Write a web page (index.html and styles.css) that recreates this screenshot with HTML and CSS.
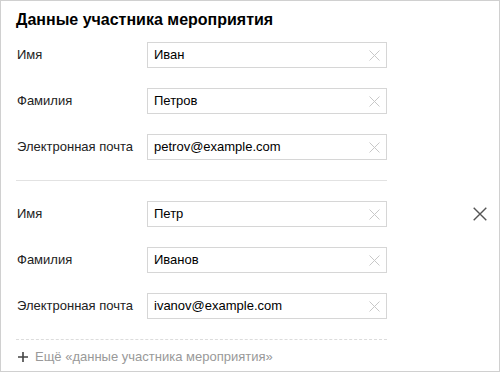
FILE: index.html
```html
<!DOCTYPE html>
<html lang="ru">
<head>
<meta charset="UTF-8" />
<title>Данные участника мероприятия</title>
<link rel="stylesheet" href="styles.css">
</head>
<body>
  <div class="panel">
    <h1 class="title">Данные участника мероприятия</h1>

    <div class="group">
      <div class="fields">
        <label class="label">Имя</label>
        <div class="field"><span class="value">Иван</span><svg class="clear" width="11" height="11" viewBox="0 0 11 11"><path d="M0.5 0.5L10.5 10.5M10.5 0.5L0.5 10.5" stroke="#c8c8c8" stroke-width="1" fill="none"/></svg></div>
        <label class="label">Фамилия</label>
        <div class="field"><span class="value">Петров</span><svg class="clear" width="11" height="11" viewBox="0 0 11 11"><path d="M0.5 0.5L10.5 10.5M10.5 0.5L0.5 10.5" stroke="#c8c8c8" stroke-width="1" fill="none"/></svg></div>
        <label class="label">Электронная почта</label>
        <div class="field"><span class="value">petrov@example.com</span><svg class="clear" width="11" height="11" viewBox="0 0 11 11"><path d="M0.5 0.5L10.5 10.5M10.5 0.5L0.5 10.5" stroke="#c8c8c8" stroke-width="1" fill="none"/></svg></div>
      </div>
    </div>

    <div class="divider"></div>

    <div class="group">
      <div class="fields">
        <label class="label">Имя</label>
        <div class="field"><span class="value">Петр</span><svg class="clear" width="11" height="11" viewBox="0 0 11 11"><path d="M0.5 0.5L10.5 10.5M10.5 0.5L0.5 10.5" stroke="#c8c8c8" stroke-width="1" fill="none"/></svg></div>
        <label class="label">Фамилия</label>
        <div class="field"><span class="value">Иванов</span><svg class="clear" width="11" height="11" viewBox="0 0 11 11"><path d="M0.5 0.5L10.5 10.5M10.5 0.5L0.5 10.5" stroke="#c8c8c8" stroke-width="1" fill="none"/></svg></div>
        <label class="label">Электронная почта</label>
        <div class="field"><span class="value">ivanov@example.com</span><svg class="clear" width="11" height="11" viewBox="0 0 11 11"><path d="M0.5 0.5L10.5 10.5M10.5 0.5L0.5 10.5" stroke="#c8c8c8" stroke-width="1" fill="none"/></svg></div>
      </div>
      <button class="remove" type="button" title="Удалить">
        <svg width="14" height="14" viewBox="0 0 14 14"><path d="M0.7 0.7L13.3 13.3M13.3 0.7L0.7 13.3" stroke="#555" stroke-width="1.4" fill="none"/></svg>
      </button>
    </div>

    <div class="dashed"></div>

    <div class="more">
      <svg class="plus" width="10" height="10" viewBox="0 0 10 10"><path d="M5 0V10M0 5H10" stroke="#444" stroke-width="1.6" fill="none"/></svg>
      <span>Ещё «данные участника мероприятия»</span>
    </div>
  </div>
</body>
</html>
```

FILE: styles.css
```css
* {
  box-sizing: border-box;
}
html, body {
  margin: 0;
  padding: 0;
  background: #fff;
}

.panel {
  width: 500px;
  height: 372px;
  border: 1px solid #d0d0d0;
  padding: 0 12px 0 15px;
  font-family: "Liberation Sans", Arial, sans-serif;
  font-size: 13px;
  color: #222;
  overflow: hidden;
}

.title {
  margin: 0;
  padding-top: 9px;
  font-size: 16px;
  line-height: 19px;
  font-weight: bold;
  color: #000;
}

.group {
  display: flex;
  align-items: flex-start;
}
.group:first-of-type {
  margin-top: 13px;
}

.fields {
  display: grid;
  grid-template-columns: 131px 240px;
  row-gap: 20px;
  align-items: center;
}

.label {
  line-height: 16px;
  padding-left: 1px;
}

.field {
  display: flex;
  align-items: center;
  height: 26px;
  border: 1px solid #d6d6d6;
  padding: 0 6px 0 6px;
  color: #000;
}
.value {
  flex: 1;
  line-height: 16px;
}
.clear {
  display: block;
}

.remove {
  margin-left: auto;
  margin-top: 6px;
  padding: 0;
  border: none;
  background: none;
  cursor: pointer;
}
.remove svg {
  display: block;
}

.divider {
  width: 371px;
  height: 1px;
  background: #e2e2e2;
  margin: 20px 0 20px;
}

.dashed {
  width: 371px;
  border-top: 1px dashed #dcdcdc;
  margin-top: 20px;
}

.more {
  display: flex;
  align-items: center;
  gap: 7px;
  margin-top: 9px;
  padding-left: 2px;
  color: #999;
  line-height: 16px;
}
.plus {
  display: block;
}
```
